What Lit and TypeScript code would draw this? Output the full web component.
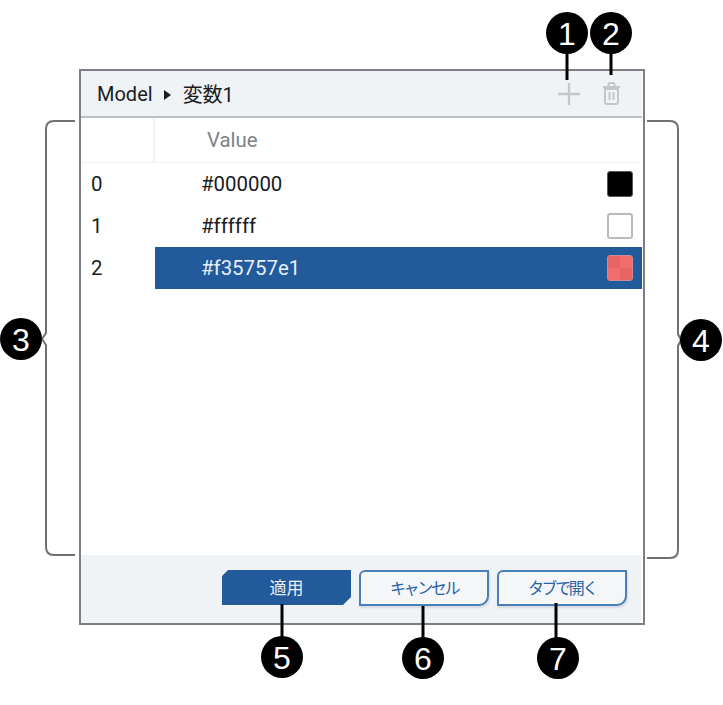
import { LitElement, html, css, svg } from "lit";
import { customElement } from "lit/decorators.js";

const rows = [
  { i: "0", v: "#000000", kind: "black" },
  { i: "1", v: "#ffffff", kind: "white" },
  { i: "2", v: "#f35757e1", kind: "red" },
];

const badges = [
  ["1", 567, 33], ["2", 611, 33], ["3", 21, 339], ["4", 701, 340],
  ["5", 282, 657], ["6", 423, 658], ["7", 558, 658],
] as const;

@customElement("app-root")
export class AppRoot extends LitElement {
  static styles = css`
    :host {
      display: block;
      position: relative;
      width: 723px;
      height: 705px;
      background: #fff;
      font-family: Roboto, "Noto Sans CJK JP", sans-serif;
      color: #1a1c1f;
      overflow: hidden;
    }
    .page { padding: 69px 78px 0 79px; box-sizing: border-box; height: 100%; }
    .frame {
      width: 566px;
      height: 556px;
      box-sizing: border-box;
      border: 2px solid #7c7f83;
      display: flex;
      flex-direction: column;
      background: #fff;
    }
    .head {
      height: 47px;
      flex: none;
      box-sizing: border-box;
      margin-right: 1px;
      background: #f0f3f6;
      border-bottom: 2px solid #bcc0c5;
      display: flex;
      align-items: center;
      padding-left: 16px;
      font-size: 20px;
    }
    .caret {
      width: 0; height: 0;
      border-left: 7px solid #1a1c1f;
      border-top: 5px solid transparent;
      border-bottom: 5px solid transparent;
      margin: 2px 12px 0 11px;
    }
    .tools { margin-left: auto; display: flex; align-items: center; gap: 23px; padding-right: 22px; }
    .tools svg { display: block; }
    .colhead {
      height: 45px;
      flex: none;
      display: grid;
      grid-template-columns: 74px 1fr;
      box-sizing: border-box;
      border-bottom: 1px solid #eef2f4;
      margin-right: 2px;
    }
    .colhead .blank { border-right: 2px solid #eef2f4; }
    .colhead .val { padding-left: 52px; line-height: 45px; font-size: 20.4px; color: #7d8389; }
    .list { flex: 1; }
    .row {
      display: grid;
      grid-template-columns: 74px 1fr;
      height: 42px;
      font-size: 20.4px;
      line-height: 42px;
      margin-right: 1px;
    }
    .idx { padding-left: 10px; }
    .cell {
      padding: 0 9px 0 46px;
      display: flex;
      align-items: center;
      justify-content: space-between;
    }
    .row.sel .cell { background: #225a9b; color: #e6eef7; }
    .swatch { width: 26px; height: 26px; box-sizing: border-box; border-radius: 3px; }
    .swatch.black { background: #000; border: 1px solid #555; }
    .swatch.white { background: #fff; border: 2px solid #b9b9b9; }
    .swatch.red {
      border: 1px solid #c98a92;
      background: conic-gradient(#f36d6d 0 25%, #e96464 0 50%, #f36d6d 0 75%, #e96464 0);
    }
    .foot {
      height: 68px;
      flex: none;
      box-sizing: border-box;
      background: #f0f3f6;
      margin-right: 2px;
      display: flex;
      align-items: flex-start;
      justify-content: flex-end;
      gap: 8px;
      padding: 15px 14px 0 0;
    }
    button {
      width: 130px;
      height: 36px;
      box-sizing: border-box;
      padding: 0 0 3px;
      font: 16px "Noto Sans CJK JP", sans-serif;
      letter-spacing: -2.4px;
      color: #2a62a6;
      background: #f4f6f8;
      border: 2px solid #4a7fb8;
      border-radius: 6px 0 10px 0;
      box-shadow: 1px 2px 2px #d6dadd;
    }
    button.primary {
      width: 129px;
      height: 35px;
      font-size: 17px;
      letter-spacing: 0;
      background: #225a9b;
      border: none;
      color: #e8f0f8;
      border-radius: 0;
      clip-path: polygon(6px 0, 100% 0, 100% 27px, 121px 100%, 0 100%, 0 6px);
      box-shadow: none;
    }
    .over { position: absolute; inset: 0; width: 723px; height: 705px; pointer-events: none; }
    .lead { stroke: #000; stroke-width: 3; fill: none; }
    .brace { stroke: #6f7174; stroke-width: 2; fill: none; }
    .badge { font: 500 32px "Liberation Sans", Arial, sans-serif; fill: #fff; text-anchor: middle; }
  `;

  private overlay() {
    return svg`
      <path class="brace" d="M75 121H54Q46 121 46 129V333L42 339L46 345V547Q46 555 54 555H75"/>
      <path class="brace" d="M647 121H670Q678 121 678 129V334L681 340L678 346V550Q678 558 670 558H647"/>
      <path class="lead" d="M567 50V80M611 50V75M282 604V640M423 606V640M556 603V640"/>
      ${badges.map(
        ([n, x, y]) => svg`
          <circle cx=${x} cy=${y} r="21" fill="#000"/>
          <text class="badge" x=${x} y=${y + 12}>${n}</text>`
      )}
    `;
  }

  render() {
    return html`
      <div class="page">
        <div class="frame">
          <div class="head">
            <span>Model</span><span class="caret"></span><span>変数1</span>
            <div class="tools">
              <svg width="22" height="22" viewBox="0 0 22 22"><path d="M11 0V22M0 11H22" stroke="#c3c7cb" stroke-width="2.4" fill="none"/></svg>
              <svg width="17" height="23" viewBox="0 0 17 23" fill="none" stroke="#c3c7cb" stroke-width="2">
                <path d="M0 5H17M5.5 5V2.5Q5.500 1 7 1H10Q11.500 1 11.500 2.500V5"/>
                <path d="M2 7V20Q2 22 4 22H13Q15 22 15 20V7Z"/>
                <path d="M6.500 10V18M10.500 10V18"/>
              </svg>
            </div>
          </div>
          <div class="colhead"><div class="blank"></div><div class="val">Value</div></div>
          <div class="list">
            ${rows.map(
              (r) => html`
                <div class="row ${r.kind === "red" ? "sel" : ""}">
                  <div class="idx">${r.i}</div>
                  <div class="cell"><span>${r.v}</span><span class="swatch ${r.kind}"></span></div>
                </div>`
            )}
          </div>
          <div class="foot">
            <button class="primary">適用</button>
            <button>キャンセル</button>
            <button>タブで開く</button>
          </div>
        </div>
      </div>
      <svg class="over" viewBox="0 0 723 705">${this.overlay()}</svg>
    `;
  }
}
